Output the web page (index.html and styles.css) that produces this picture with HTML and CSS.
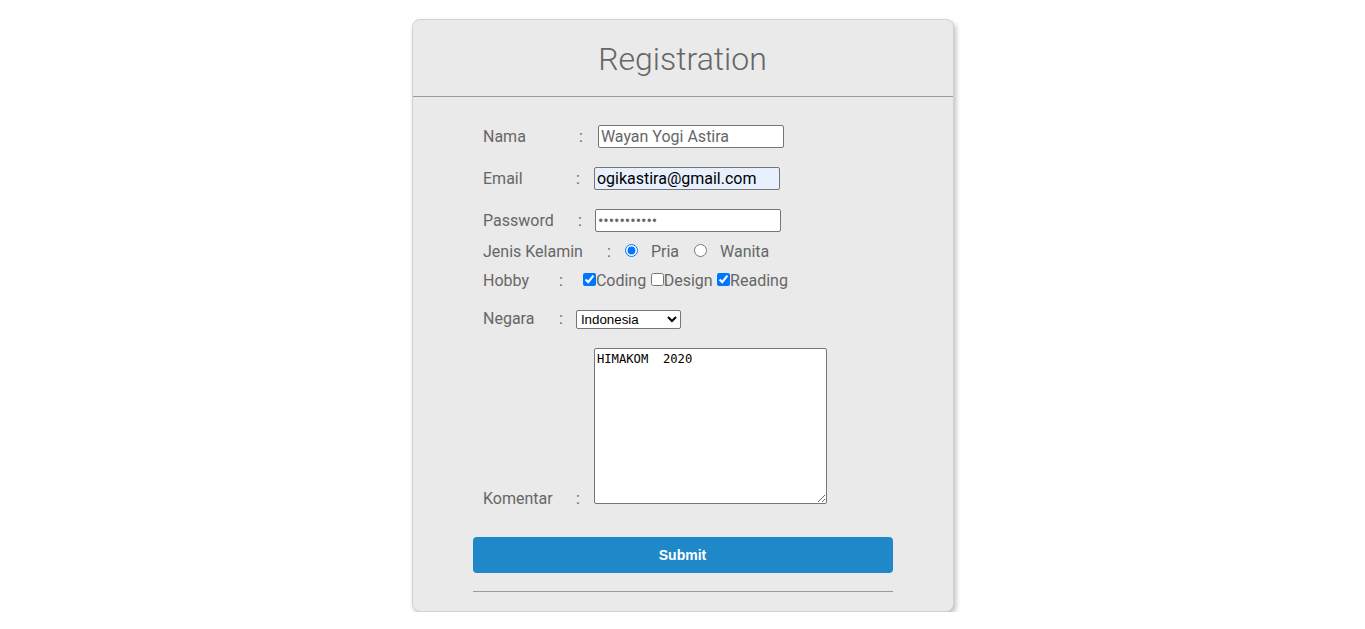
FILE: index.html
```html
<!DOCTYPE html>
<html lang="id">
<head>
<meta charset="utf-8">
<title>Registration</title>
<link rel="stylesheet" href="styles.css">
</head>
<body>
<div class="card">
  <div class="card-header">
    <h1 class="title">Registration</h1>
  </div>
  <form class="form">
    <div class="row row--nama">
      <label class="label">Nama</label><span class="colon">:</span>
      <input class="field" type="text" value="Wayan Yogi Astira">
    </div>
    <div class="row row--email">
      <label class="label">Email</label><span class="colon">:</span>
      <input class="field field--autofill" type="text" value="ogikastira@gmail.com">
    </div>
    <div class="row row--password">
      <label class="label">Password</label><span class="colon">:</span>
      <input class="field" type="password" value="abcdefghijk">
    </div>
    <div class="row row--gender">
      <label class="label">Jenis Kelamin</label><span class="colon">:</span>
      <input class="radio" type="radio" name="jk" checked><span class="opt opt--first">Pria</span><input class="radio" type="radio" name="jk"><span class="opt">Wanita</span>
    </div>
    <div class="row row--hobby">
      <label class="label">Hobby</label><span class="colon">:</span>
      <input class="check" type="checkbox" checked><span>Coding</span><input class="check check--gap" type="checkbox"><span>Design</span><input class="check check--gap" type="checkbox" checked><span>Reading</span>
    </div>
    <div class="row row--negara">
      <label class="label">Negara</label><span class="colon">:</span>
      <select class="select">
        <option>Indonesia</option>
        <option>Malaysia</option>
        <option>Singapura</option>
      </select>
    </div>
    <div class="row row--komentar">
      <label class="label">Komentar</label><span class="colon">:</span>
      <textarea class="textarea">HIMAKOM  2020</textarea>
    </div>
    <button class="submit" type="button">Submit</button>
    <hr class="rule">
  </form>
</div>
</body>
</html>
```

FILE: styles.css
```css
html, body {
  margin: 0;
  padding: 0;
  background: #ffffff;
}

body {
  font-family: Roboto, "Liberation Sans", Arial, sans-serif;
  color: #666666;
}

.card {
  width: 540px;
  margin: 19px auto 0;
  background: #eaeaea;
  border: 1px solid #d2d2d2;
  border-radius: 8px;
  box-shadow: 2px 3px 5px rgba(0, 0, 0, 0.25);
}

.card-header {
  padding: 20px 0 18px;
  border-bottom: 1px solid #9a9a9a;
}

.title {
  margin: 0;
  font-family: Roboto, sans-serif;
  font-weight: 300;
  font-size: 32px;
  line-height: 38px;
  text-align: center;
  color: #666666;
}

.form {
  padding: 28px 60px 19px;
}

.row {
  display: flex;
  align-items: baseline;
  padding-left: 10.5px;
  font-size: 16px;
  line-height: 19px;
  color: #666666;
}

.label {
  flex: none;
}

.colon {
  flex: none;
}

.row--nama .label { width: 96px; }
.row--nama .colon { margin-right: 15px; }

.row--email { margin-top: 19px; }
.row--email .label { width: 93px; }
.row--email .colon { margin-right: 14px; }

.row--password { margin-top: 19px; }
.row--password .label { width: 95px; }
.row--password .colon { margin-right: 13px; }

.row--gender { margin-top: 10px; }
.row--gender .label { width: 124px; }
.row--gender .colon { margin-right: 14px; }

.row--hobby { margin-top: 10px; }
.row--hobby .label { width: 76px; }
.row--hobby .colon { margin-right: 20px; }

.row--negara { margin-top: 19px; }
.row--negara .label { width: 76px; }
.row--negara .colon { margin-right: 13px; }

.row--komentar {
  margin-top: 19px;
  align-items: flex-end;
}
.row--komentar .label { width: 93px; margin-bottom: -4px; }
.row--komentar .colon { margin-right: 14px; margin-bottom: -4px; }

.field {
  box-sizing: border-box;
  width: 186px;
  height: 23px;
  margin: 0;
  padding: 1px 2px;
  border: 1px solid #767676;
  border-radius: 2px;
  background: #ffffff;
  font-family: Roboto, sans-serif;
  font-size: 16px;
  color: #666666;
}

.field--autofill {
  background: #e8f0fe;
  color: #000000;
}

.radio {
  width: 13px;
  height: 13px;
  margin: 0;
  flex: none;
}

.opt {
  margin: 0 15px 0 13px;
}

.check {
  width: 13px;
  height: 13px;
  margin: 0;
  flex: none;
}

.check--gap {
  margin-left: 4.5px;
}

.select {
  box-sizing: border-box;
  width: 105px;
  height: 19px;
  margin: 0;
  border: 1px solid #767676;
  border-radius: 2px;
  background: #ffffff;
  color: #000000;
  font-family: "Liberation Sans", Arial, sans-serif;
  font-size: 13.33px;
}

.textarea {
  box-sizing: border-box;
  width: 233px;
  height: 156px;
  margin: 0;
  padding: 3px 2px 2px;
  border: 1px solid #767676;
  border-radius: 2px;
  background: #ffffff;
  color: #000000;
  font-family: "DejaVu Sans Mono", "Liberation Mono", monospace;
  font-size: 12.2px;
}

.submit {
  display: block;
  width: 100%;
  height: 36px;
  margin: 33px 0 0;
  border: 0;
  border-radius: 4px;
  background: #1e88c9;
  color: #ffffff;
  font-family: "Liberation Sans", Arial, sans-serif;
  font-weight: bold;
  font-size: 14px;
}

.rule {
  margin: 18px 0 0;
  border: 0;
  border-top: 1px solid #9a9a9a;
  height: 0;
}
```
